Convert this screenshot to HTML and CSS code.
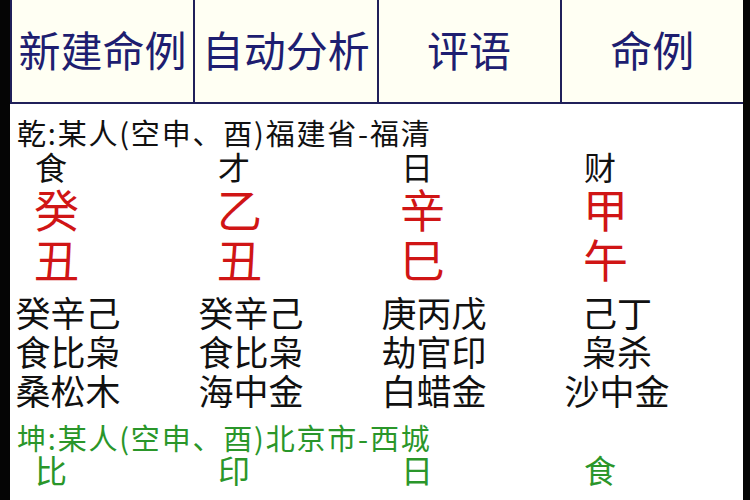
FILE: index.html
```html
<!DOCTYPE html>
<html lang="zh">
<head>
<meta charset="utf-8">
<link rel="stylesheet" href="styles.css">
</head>
<body>
<div class="frame">
  <div class="tabs">
    <div class="tab">新建命例</div>
    <div class="tab">自动分析</div>
    <div class="tab">评语</div>
    <div class="tab">命例</div>
  </div>
  <div class="content">
    <div class="title">乾:某人(空申、酉)福建省-福清</div>
    <div class="grid">
      <div class="label">食</div><div class="label">才</div><div class="label">日</div><div class="label">财</div>
      <div class="gz">癸</div><div class="gz">乙</div><div class="gz">辛</div><div class="gz">甲</div>
      <div class="gz">丑</div><div class="gz">丑</div><div class="gz">巳</div><div class="gz">午</div>
    </div>
    <div class="grid stems">
      <div class="stem">癸辛己</div><div class="stem">癸辛己</div><div class="stem">庚丙戊</div><div class="stem">己丁</div>
      <div class="stem">食比枭</div><div class="stem">食比枭</div><div class="stem">劫官印</div><div class="stem">枭杀</div>
      <div class="stem">桑松木</div><div class="stem">海中金</div><div class="stem">白蜡金</div><div class="stem">沙中金</div>
    </div>
    <div class="title green">坤:某人(空申、酉)北京市-西城</div>
    <div class="grid">
      <div class="label green">比</div><div class="label green">印</div><div class="label green">日</div><div class="label green">食</div>
    </div>
  </div>
</div>
</body>
</html>
```

FILE: styles.css
```css
html, body {
  margin: 0;
  padding: 0;
  background: #ffffff;
}
body {
  width: 750px;
  height: 500px;
  overflow: hidden;
  font-family: "Noto Sans CJK SC", "Noto Sans", sans-serif;
}
.frame {
  height: 500px;
  border-left: 10px solid #050505;
  border-right: 7px solid #050505;
  display: flex;
  flex-direction: column;
}
.tabs {
  display: flex;
  height: 102px;
  background: #fffff3;
  border-left: 2px solid #20205a;
  border-bottom: 2px solid #20205a;
}
.tab {
  flex: 1;
  display: flex;
  align-items: center;
  justify-content: center;
  font-size: 42px;
  color: #1e1e70;
  padding-bottom: 6px;
}
.tab + .tab {
  border-left: 2px solid #20205a;
}
.content {
  padding-top: 12px;
}
.title {
  font-size: 29px;
  line-height: 32px;
  padding-left: 7px;
  letter-spacing: 1.8px;
  color: #111;
  white-space: nowrap;
}
.grid {
  display: grid;
  grid-template-columns: repeat(4, 183px);
}
.label {
  font-size: 32px;
  line-height: 36px;
  padding-left: 25px;
  color: #111;
}
.gz {
  font-size: 45px;
  line-height: 50px;
  padding-left: 24px;
  color: #d01515;
}
.stems {
  margin-top: 8px;
}
.stem {
  font-size: 35px;
  line-height: 39px;
  width: 108px;
  margin-left: 4px;
  text-align: center;
  color: #111;
}
.green {
  color: #2a962a;
}
.title.green {
  margin-top: 12px;
}
.label.green {
  margin-top: -2px;
}
```
